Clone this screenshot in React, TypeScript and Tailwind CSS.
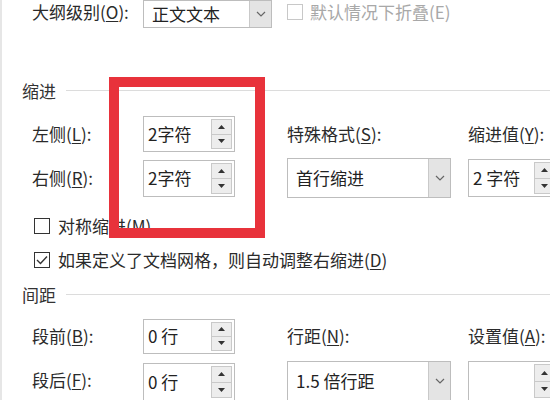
import React from 'react';

const FONT = { fontFamily: '"Noto Sans CJK SC", "Noto Sans", sans-serif' };

const Key: React.FC<{ k: string }> = ({ k }) => (
  <>
    (<span className="underline underline-offset-2">{k}</span>):
  </>
);

const Tri: React.FC<{ up?: boolean }> = ({ up }) => (
  <svg width="7" height="4" viewBox="0 0 7 4">
    <path d={up ? 'M0 4 L3.5 0 L7 4 Z' : 'M0 0 L3.5 4 L7 0 Z'} fill="#333" />
  </svg>
);

const Spinner: React.FC<{ value: string; w: string; h: string }> = ({ value, w, h }) => (
  <div className={`flex shrink-0 ${w} ${h} border border-[#bdbdbd] bg-white`}>
    <div className="flex-1 flex items-center pl-[4px] text-[17px] text-[#222] whitespace-nowrap overflow-hidden">{value}</div>
    <div className="w-[21px] my-[2px] mr-[2px] flex flex-col border border-[#c9c9c9] shrink-0">
      <div className="flex-1 flex items-center justify-center bg-[#ededed] border-b border-[#c9c9c9]">
        <Tri up />
      </div>
      <div className="flex-1 flex items-center justify-center bg-[#ededed]">
        <Tri />
      </div>
    </div>
  </div>
);

const Dropdown: React.FC<{ value: string; w: string; h: string }> = ({ value, w, h }) => (
  <div className={`flex shrink-0 ${w} ${h} border border-[#bdbdbd] bg-white`}>
    <div className="flex-1 flex items-center pl-[8px] text-[17px] text-[#222] whitespace-nowrap">{value}</div>
    <div className="w-[22px] flex items-center justify-center bg-[#e4e4e4] border-l border-[#c9c9c9] shrink-0">
      <svg width="10" height="6" viewBox="0 0 10 6">
        <path d="M1 1 L5 5 L9 1" fill="none" stroke="#666" strokeWidth="1.2" />
      </svg>
    </div>
  </div>
);

const Section: React.FC<{ title: string; className?: string }> = ({ title, className }) => (
  <div className={`flex items-center h-[20px] pl-[20px] ${className ?? ''}`}>
    <span className="text-[17px] text-[#333] leading-none">{title}</span>
    <div className="flex-1 h-px bg-[#dcdcdc] ml-[10px]" />
  </div>
);

const Check: React.FC<{ checked?: boolean; disabled?: boolean }> = ({ checked, disabled }) => (
  <div
    className={`w-[16px] h-[16px] border flex items-center justify-center bg-white shrink-0 ${
      disabled ? 'border-[#c8c8c8]' : 'border-[#333]'
    }`}
  >
    {checked && (
      <svg width="12" height="10" viewBox="0 0 12 10">
        <path d="M1 5 L4.5 8.5 L11 1.5" fill="none" stroke="#333" strokeWidth="1.4" />
      </svg>
    )}
  </div>
);

export default function App() {
  return (
    <div
      className="relative w-[550px] h-[400px] overflow-hidden bg-white border-l-2 border-[#e6e6e6] text-[#2a2a2a]"
      style={FONT}
    >
      {/* 大纲级别 */}
      <div className="flex items-center h-[28px] pl-[30px]">
        <div className="w-[111px] shrink-0 text-[17px] -mt-[4px]">
          大纲级别<Key k="O" />
        </div>
        <Dropdown value="正文文本" w="w-[129px]" h="h-[28px]" />
        <div className="flex items-center shrink-0 ml-[15px] -mt-[4px] gap-[7px] text-[17px] text-[#a8a8a8]">
          <Check disabled />
          <span>默认情况下折叠(E)</span>
        </div>
      </div>

      <Section title="缩进" className="mt-[52px]" />

      <div className="flex items-center h-[36px] mt-[16px] pl-[30px] text-[17px]">
        <div className="w-[111px] shrink-0">
          左侧<Key k="L" />
        </div>
        <Spinner value="2字符" w="w-[92px]" h="h-[36px]" />
        <div className="w-[181px] shrink-0 ml-[52px]">
          特殊格式<Key k="S" />
        </div>
        <div className="shrink-0">
          缩进值<Key k="Y" />
        </div>
      </div>

      <div className="flex items-center h-[40px] mt-[6px] pl-[30px] text-[17px]">
        <div className="w-[111px] shrink-0">
          右侧<Key k="R" />
        </div>
        <Spinner value="2字符" w="w-[92px]" h="h-[37px]" />
        <div className="ml-[52px] shrink-0">
          <Dropdown value="首行缩进" w="w-[164px]" h="h-[40px]" />
        </div>
        <div className="ml-[17px] shrink-0">
          <Spinner value="2 字符" w="w-[90px]" h="h-[38px]" />
        </div>
      </div>

      <div className="flex items-center h-[20px] mt-[18px] pl-[32px] gap-[8px] text-[17px]">
        <Check />
        <span>对称缩进(<span className="underline underline-offset-2">M</span>)</span>
      </div>

      <div className="flex items-center h-[20px] mt-[14px] pl-[32px] gap-[8px] text-[17px]">
        <Check checked />
        <span className="whitespace-nowrap">
          如果定义了文档网格，则自动调整右缩进(<span className="underline underline-offset-2">D</span>)
        </span>
      </div>

      <Section title="间距" className="mt-[14px]" />

      <div className="flex items-center h-[36px] mt-[14px] pl-[30px] text-[17px]">
        <div className="w-[111px] shrink-0">
          段前<Key k="B" />
        </div>
        <Spinner value="0 行" w="w-[92px]" h="h-[35px]" />
        <div className="w-[181px] shrink-0 ml-[52px]">
          行距<Key k="N" />
        </div>
        <div className="shrink-0">
          设置值<Key k="A" />
        </div>
      </div>

      <div className="flex items-start h-[40px] mt-[7px] pl-[30px] text-[17px]">
        <div className="w-[111px] shrink-0 mt-[6px]">
          段后<Key k="F" />
        </div>
        <div className="mt-[2px] shrink-0">
          <Spinner value="0 行" w="w-[92px]" h="h-[38px]" />
        </div>
        <div className="ml-[52px] shrink-0">
          <Dropdown value="1.5 倍行距" w="w-[164px]" h="h-[40px]" />
        </div>
        <div className="ml-[17px] shrink-0">
          <Spinner value="" w="w-[90px]" h="h-[40px]" />
        </div>
      </div>

      {/* red highlight */}
      <div className="absolute left-[107px] top-[77px] w-[156px] h-[161px] border-[10px] border-[#e8323b]" />
    </div>
  );
}
